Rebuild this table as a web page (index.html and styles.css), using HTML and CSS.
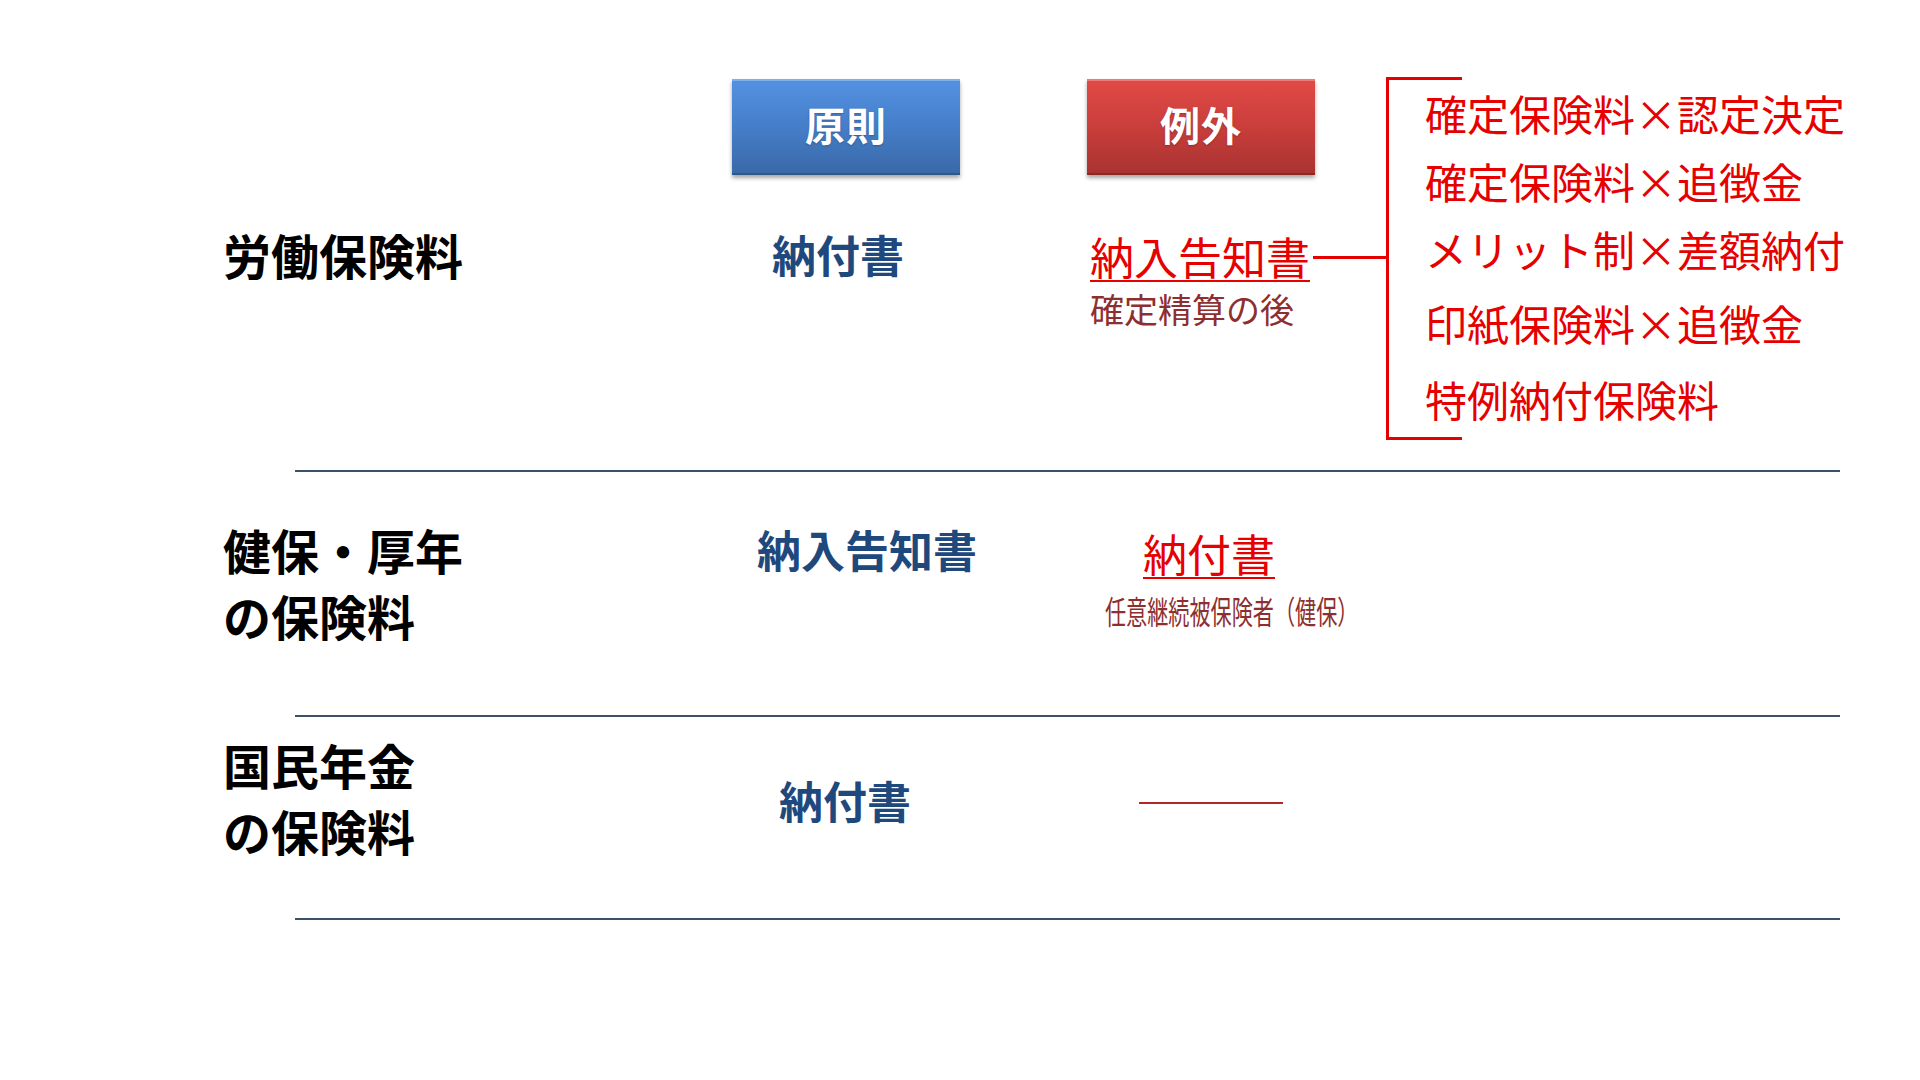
FILE: index.html
```html
<!DOCTYPE html>
<html lang="ja">
<head>
<meta charset="utf-8">
<title>保険料の納付方法</title>
<link rel="stylesheet" href="styles.css">
</head>
<body>
<main class="slide">
  <section class="sec sec-top">
    <div class="head-blank"></div>
    <div class="head-cell"><div class="tag tag-blue">原則</div></div>
    <div class="head-cell"><div class="tag tag-red">例外</div></div>
    <div class="bracket">
      <ul class="exc-list">
        <li>確定保険料×認定決定</li>
        <li>確定保険料×追徴金</li>
        <li>メリット制×差額納付</li>
        <li class="li4">印紙保険料×追徴金</li>
        <li class="li5">特例納付保険料</li>
      </ul>
    </div>
    <div class="label label-r1">労働保険料</div>
    <div class="rule rule-r1"><span class="blue">納付書</span></div>
    <div class="exc exc-r1">
      <div class="exc-main"><span class="red-u">納入告知書</span><span class="connector"></span></div>
      <div class="note">確定精算の後</div>
    </div>
  </section>
  <hr class="divider">
  <section class="sec sec-mid">
    <div class="label">健保・厚年<br>の保険料</div>
    <div class="rule rule-r2"><span class="blue">納入告知書</span></div>
    <div class="exc exc-r2">
      <div class="red-u red-r2">納付書</div>
      <div class="note-narrow"><span>任意継続被保険者（健保）</span></div>
    </div>
  </section>
  <hr class="divider">
  <section class="sec sec-low">
    <div class="label">国民年金<br>の保険料</div>
    <div class="rule rule-r3"><span class="blue">納付書</span></div>
    <div class="exc exc-r3"><span class="dash"></span></div>
  </section>
  <hr class="divider">
</main>
</body>
</html>
```

FILE: styles.css
```css
* { box-sizing: border-box; }
html, body { margin: 0; padding: 0; background: #ffffff; }
body {
  width: 1920px;
  height: 1080px;
  overflow: hidden;
  font-family: "Noto Sans CJK JP", "Noto Sans", sans-serif;
}
.slide { padding-top: 77px; }

.sec {
  display: grid;
  grid-template-columns: 509px 355px 299px 1fr;
  padding-left: 223px;
}
.sec-top { grid-template-rows: 98px auto; }

.head-cell { align-self: start; }
.tag {
  margin-top: 2px;
  width: 228px;
  height: 96px;
  padding-bottom: 7px;
  display: flex;
  align-items: center;
  justify-content: center;
  color: #ffffff;
  font-weight: 700;
  font-size: 40px;
  letter-spacing: 1px;
  text-shadow: 0 1px 2px rgba(0,0,0,0.25);
  box-shadow: 0 3px 4px rgba(0,0,0,0.35);
}
.tag-blue {
  background: linear-gradient(#5391e0 0%, #4680cc 45%, #3a69a9 100%);
  border-top: 2px solid #7eb0ee;
  border-bottom: 2px solid #2f5788;
}
.tag-red {
  background: linear-gradient(#e04a46 0%, #cc3f3c 45%, #a93331 100%);
  border-top: 2px solid #f07a76;
  border-bottom: 2px solid #8b2725;
}

.bracket {
  grid-column: 4;
  grid-row: 1 / span 2;
  align-self: start;
  position: relative;
  border-left: 3px solid #e60000;
  padding: 2px 0 7px 36px;
  margin-bottom: 30px;
}
.bracket::before,
.bracket::after {
  content: "";
  position: absolute;
  left: -3px;
  width: 76px;
  height: 3px;
  background: #e60000;
}
.bracket::before { top: 0; }
.bracket::after { bottom: 0; }
.exc-list {
  list-style: none;
  margin: 0;
  padding: 0;
  color: #e60000;
  font-size: 42px;
  line-height: 68px;
  white-space: nowrap;
}
.exc-list .li4 { margin-top: 6px; }
.exc-list .li5 { margin-top: 8px; }

.label {
  color: #000000;
  font-weight: 700;
  font-size: 48px;
  line-height: 66px;
  white-space: nowrap;
}
.label-r1 { margin-top: 46px; align-self: start; }

.blue {
  color: #1f497d;
  font-weight: 700;
  font-size: 44px;
  line-height: 66px;
  white-space: nowrap;
}
.rule { display: flex; }
.rule-r1 { padding-left: 40px; margin-top: 46px; align-self: start; }
.rule-r2 { padding-left: 25px; }
.rule-r3 { padding-left: 47px; align-self: center; padding-top: 6px; }

.exc { align-self: start; }
.exc-r1 { margin-top: 46px; padding-left: 3px; }
.exc-main { display: flex; align-items: center; }
.red-u {
  color: #e60000;
  font-size: 44px;
  line-height: 62px;
  text-decoration: underline;
  text-decoration-thickness: 2px;
  text-underline-offset: 5px;
  white-space: nowrap;
}
.exc-r1 .red-u { padding-top: 4px; line-height: 62px; }
.connector {
  flex: 1;
  height: 3px;
  margin-left: 3px;
  margin-top: 6px;
  background: #e60000;
}
.note {
  color: #8e2f2f;
  font-size: 34px;
  line-height: 38px;
  margin-top: 3px;
  white-space: nowrap;
}

.sec-mid { padding-top: 44px; padding-bottom: 67px; }
.exc-r2 { padding-left: 56px; }
.red-r2 { padding-top: 6px; }
.note-narrow {
  color: #8e2f2f;
  font-size: 32px;
  line-height: 43px;
  margin-top: 5px;
  white-space: nowrap;
  margin-left: -38px;
}
.note-narrow span {
  display: inline-block;
  transform: scaleX(0.66);
  transform-origin: left center;
}

.sec-low { padding-top: 14px; padding-bottom: 55px; }
.exc-r3 { align-self: center; padding-left: 52px; margin-top: 12px; display: flex; }
.dash {
  display: block;
  width: 144px;
  height: 2px;
  background: #b0282a;
}

.divider {
  margin: 0 0 0 295px;
  width: 1545px;
  height: 2px;
  border: 0;
  background: #3a5369;
}
```
